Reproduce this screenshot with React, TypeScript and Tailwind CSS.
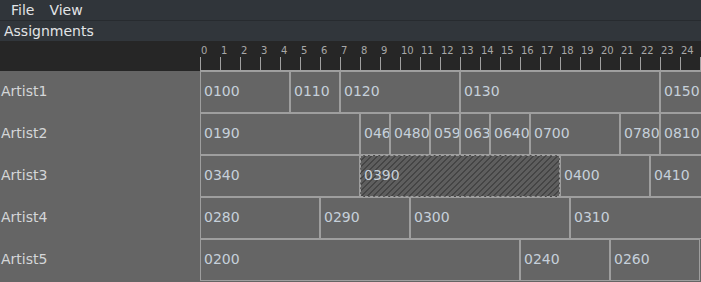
import React from "react";

type Block = { label: string; start: number; end: number; hatched?: boolean };

const rows: { name: string; blocks: Block[] }[] = [
  {
    name: "Artist1",
    blocks: [
      { label: "0100", start: 0, end: 4.5 },
      { label: "0110", start: 4.5, end: 7 },
      { label: "0120", start: 7, end: 13 },
      { label: "0130", start: 13, end: 23 },
      { label: "0150", start: 23, end: 26 },
    ],
  },
  {
    name: "Artist2",
    blocks: [
      { label: "0190", start: 0, end: 8 },
      { label: "046", start: 8, end: 9.5 },
      { label: "0480", start: 9.5, end: 11.5 },
      { label: "059", start: 11.5, end: 13 },
      { label: "063", start: 13, end: 14.5 },
      { label: "0640", start: 14.5, end: 16.5 },
      { label: "0700", start: 16.5, end: 21 },
      { label: "0780", start: 21, end: 23 },
      { label: "0810", start: 23, end: 26 },
    ],
  },
  {
    name: "Artist3",
    blocks: [
      { label: "0340", start: 0, end: 8 },
      { label: "0390", start: 8, end: 18, hatched: true },
      { label: "0400", start: 18, end: 22.5 },
      { label: "0410", start: 22.5, end: 26 },
    ],
  },
  {
    name: "Artist4",
    blocks: [
      { label: "0280", start: 0, end: 6 },
      { label: "0290", start: 6, end: 10.5 },
      { label: "0300", start: 10.5, end: 18.5 },
      { label: "0310", start: 18.5, end: 26 },
    ],
  },
  {
    name: "Artist5",
    blocks: [
      { label: "0200", start: 0, end: 16 },
      { label: "0240", start: 16, end: 20.5 },
      { label: "0260", start: 20.5, end: 25 },
    ],
  },
];

const ticks = Array.from({ length: 26 }, (_, i) => i);

export default function App() {
  return (
    <div
      className="w-[701px] h-[282px] overflow-hidden bg-[#656565] flex flex-col"
      style={{ fontFamily: '"DejaVu Sans", "Liberation Sans", sans-serif' }}
    >
      <div className="h-[20px] shrink-0 bg-[#30353a] flex items-center text-[14px] leading-[20px] text-[#e2e4e6]">
        <span className="pl-[11px]">File</span>
        <span className="pl-[15px]">View</span>
      </div>
      <div className="h-[1px] shrink-0 bg-[#272b2f]" />
      <div className="h-[20px] shrink-0 bg-[#31363b] flex items-center text-[14px] leading-[20px] text-[#e2e4e6]">
        <span className="pl-[4px]">Assignments</span>
      </div>
      <div className="h-[30px] shrink-0 bg-[#262626] flex">
        <div className="w-[200px] shrink-0" />
        <div className="flex-1 flex border-b border-[#a0a0a0] overflow-hidden">
          {ticks.map((t) => (
            <div key={t} className="w-[20px] shrink-0 flex flex-col pt-[4px]">
              <span className="text-[10px] leading-[12px] text-[#a8a8a8] pl-[1px] whitespace-nowrap">
                {t}
              </span>
              <div className="w-px h-[13px] bg-[#a0a0a0]" />
            </div>
          ))}
        </div>
      </div>
      {rows.map((r) => (
        <div key={r.name} className="h-[42px] shrink-0 flex">
          <div className="w-[200px] shrink-0 flex items-center pb-[2px] pl-[1px] text-[14px] text-[#d4d6d8]">
            {r.name}
          </div>
          <div className="flex-1 flex overflow-hidden">
            {r.blocks.map((b) => (
              <div
                key={b.label}
                className={
                  b.hatched
                    ? "shrink-0 h-full flex items-center pb-[2px] pl-[3px] overflow-hidden whitespace-nowrap border border-dashed border-[#a0a0a0] text-[14px] text-[#c6d0da] bg-[repeating-linear-gradient(135deg,#5e5e5e_0px,#5e5e5e_2.6px,#454545_2.6px,#454545_4.24px)]"
                    : "shrink-0 h-full flex items-center pb-[2px] pl-[3px] overflow-hidden whitespace-nowrap border border-[#9e9e9e] text-[14px] text-[#c6d0da] bg-[#656565]"
                }
                style={{ width: (b.end - b.start) * 20 }}
              >
                {b.label}
              </div>
            ))}
          </div>
        </div>
      ))}
    </div>
  );
}
